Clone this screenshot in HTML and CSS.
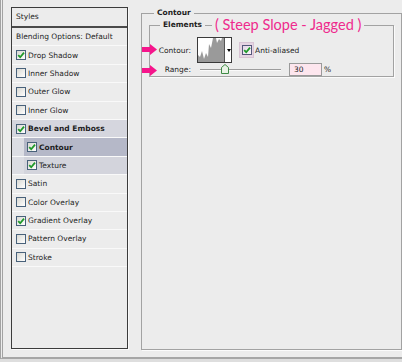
FILE: index.html
```html
<!DOCTYPE html>
<html lang="en">
<head>
	<meta charset="UTF-8" />
	<title>Layer Style - Contour</title>
	<link rel="stylesheet" href="styles.css">
</head>
<body>
	<div class="window">
		<div class="styles-list">
			<div class="list-head">Styles</div>
			<div class="row">Blending Options: Default</div>
			<div class="row"><span class="cb on"><svg viewBox="0 0 8 8"><path d="M1.2 4.2 L3.2 6.2 L7 1.6"/></svg></span>Drop Shadow</div>
			<div class="row"><span class="cb"></span>Inner Shadow</div>
			<div class="row"><span class="cb"></span>Outer Glow</div>
			<div class="row"><span class="cb"></span>Inner Glow</div>
			<div class="row parent"><span class="cb on"><svg viewBox="0 0 8 8"><path d="M1.2 4.2 L3.2 6.2 L7 1.6"/></svg></span>Bevel and Emboss</div>
			<div class="row sub selected"><div class="inner"><span class="cb on"><svg viewBox="0 0 8 8"><path d="M1.2 4.2 L3.2 6.2 L7 1.6"/></svg></span>Contour</div></div>
			<div class="row sub"><div class="inner"><span class="cb on"><svg viewBox="0 0 8 8"><path d="M1.2 4.2 L3.2 6.2 L7 1.6"/></svg></span>Texture</div></div>
			<div class="row"><span class="cb"></span>Satin</div>
			<div class="row"><span class="cb"></span>Color Overlay</div>
			<div class="row"><span class="cb on"><svg viewBox="0 0 8 8"><path d="M1.2 4.2 L3.2 6.2 L7 1.6"/></svg></span>Gradient Overlay</div>
			<div class="row"><span class="cb"></span>Pattern Overlay</div>
			<div class="row"><span class="cb"></span>Stroke</div>
		</div>

		<fieldset class="group outer">
			<legend>Contour</legend>
			<div class="elements-wrap">
				<fieldset class="group elements">
					<legend>Elements</legend>
					<div class="field-grid">
						<label>Contour:</label>
						<div class="ctrl">
							<div class="curve">
								<svg class="curve-img" viewBox="0 0 26 24" preserveAspectRatio="none">
									<polygon points="0,24 0,17 2,19 4,13 6,21 8,15 10,19 11,6 13,10 15,0 18,0 19,5 21,1 23,3 24,0 26,0 26,24"/>
								</svg>
								<span class="drop"></span>
							</div>
							<span class="check-hl"><span class="cb on"><svg viewBox="0 0 8 8"><path d="M1.2 4.2 L3.2 6.2 L7 1.6"/></svg></span></span>
							<span>Anti-aliased</span>
						</div>
						<label>Range:</label>
						<div class="ctrl">
							<div class="slider">
								<svg class="thumb" viewBox="0 0 8 10"><polygon points="4,0.5 7.5,3.5 7.5,9.5 0.5,9.5 0.5,3.5"/></svg>
							</div>
							<span class="num">30</span>
							<span class="pct">%</span>
						</div>
					</div>
				</fieldset>
				<span class="note">( Steep Slope - Jagged )</span>
				<svg class="arrow a1" viewBox="0 0 15 11"><polygon points="0,3 8,3 8,0 15,5.5 8,11 8,8 0,8"/></svg>
				<svg class="arrow a2" viewBox="0 0 15 11"><polygon points="0,3 8,3 8,0 15,5.5 8,11 8,8 0,8"/></svg>
			</div>
		</fieldset>
	</div>
</body>
</html>
```

FILE: styles.css
```css
* {
	box-sizing: border-box;
}
body {
	margin: 0;
	background-color: #dedede;
	font-family: "DejaVu Sans", Tahoma, sans-serif;
	font-size: 7.5px;
	color: #1e1e1e;
}
.window {
	height: 359px;
	border-left: 3px double #a2a2a2;
	border-bottom: 2px solid #a6a6a6;
	background-color: #ececec;
	display: flex;
	align-items: flex-start;
	padding: 7px 0 0 8px;
	gap: 13px;
}

/* left list */
.styles-list {
	width: 117px;
	height: 342px;
	flex: none;
	border: 1px solid #3c3c3c;
	box-shadow: 1px 1px 0 #fafafa;
	background-color: #ececec;
}
.list-head {
	height: 20px;
	line-height: 18px;
	padding-left: 4px;
	border-bottom: 2px solid #4a4a4a;
}
.row {
	height: 18.4px;
	display: flex;
	align-items: center;
	padding-left: 4px;
	border-bottom: 1px solid #f9f9f9;
	white-space: nowrap;
}
.row.parent {
	background-color: #d5d6de;
	font-weight: bold;
}
.row.sub {
	padding-left: 12px;
	background-color: #dcdde3;
	align-items: stretch;
}
.row.sub .inner {
	flex: 1;
	display: flex;
	align-items: center;
	padding-left: 3px;
	background-color: #d3d4dc;
}
.row.selected .inner {
	background-color: #b5b8c8;
	font-weight: bold;
}
.cb {
	width: 10px;
	height: 10px;
	flex: none;
	margin-right: 2px;
	border: 1px solid #48617a;
	background: linear-gradient(135deg, #d8d8d2, #ffffff);
	display: inline-flex;
}
.cb svg {
	width: 8px;
	height: 8px;
	fill: none;
	stroke: #1f9a2a;
	stroke-width: 1.8;
}

/* right side */
.group {
	margin: 0;
	border: 1px solid #a2a2a2;
	box-shadow: 1px 1px 0 #fbfbfb;
}
.group legend {
	font-weight: bold;
	line-height: 10px;
	padding: 0 3px;
}
.outer {
	width: 261px;
	height: 342px;
	margin-top: 1px;
	padding: 2px 7px 0 7px;
	flex: none;
}
.outer > legend {
	margin-left: 5px;
}
.elements-wrap {
	position: relative;
}
.elements {
	padding: 7px 0 0 0;
}
.elements > legend {
	margin-left: 10px;
}
.note {
	position: absolute;
	left: 63px;
	top: -3px;
	padding: 0 3px;
	background-color: #ececec;
	font-family: "Lato", "DejaVu Sans", sans-serif;
	font-size: 14.5px;
	line-height: 16px;
	color: #ef2a8d;
}
.arrow {
	position: absolute;
	left: -7px;
	width: 15px;
	height: 11px;
	fill: #f5158b;
}
.a1 {
	top: 24px;
}
.a2 {
	top: 45px;
}
.field-grid {
	display: grid;
	grid-template-columns: 41px auto;
	column-gap: 6px;
	row-gap: 0;
	align-items: center;
}
.field-grid label {
	text-align: right;
}
.ctrl {
	display: flex;
	align-items: center;
}
.curve {
	width: 35px;
	height: 26px;
	border: 1px solid #3a3a3a;
	background-color: #fff;
	display: flex;
}
.curve-img {
	width: 26px;
	height: 24px;
	fill: #9a9a9a;
}
.drop {
	flex: 1;
	border-left: 1px solid #555;
	position: relative;
}
.drop::after {
	content: "";
	position: absolute;
	left: 2px;
	top: 11px;
	border-left: 2px solid transparent;
	border-right: 2px solid transparent;
	border-top: 3px solid #000;
}
.check-hl {
	width: 15px;
	height: 16px;
	margin: 0 1px 0 7px;
	background-color: #e6d5e3;
	border: 1px solid #d8c4d4;
	display: flex;
	align-items: center;
	justify-content: center;
}
.check-hl .cb {
	margin: 0;
	border-color: #55577a;
	background: linear-gradient(135deg, #e2d6e6, #fbf6fb);
}
.slider {
	width: 81px;
	height: 2px;
	margin-left: 3px;
	border-top: 1px solid #9c9c9c;
	border-bottom: 1px solid #fafafa;
	position: relative;
}
.thumb {
	position: absolute;
	left: 21px;
	top: -6px;
	width: 8px;
	height: 10px;
	fill: #e9f3e6;
	stroke: #3f8a46;
	stroke-width: 1;
}
.num {
	width: 33px;
	height: 13px;
	margin-left: 8px;
	padding-left: 4px;
	line-height: 11px;
	border: 1px solid #9a9a9a;
	background-color: #fde6ee;
}
.pct {
	margin-left: 2px;
}
```
